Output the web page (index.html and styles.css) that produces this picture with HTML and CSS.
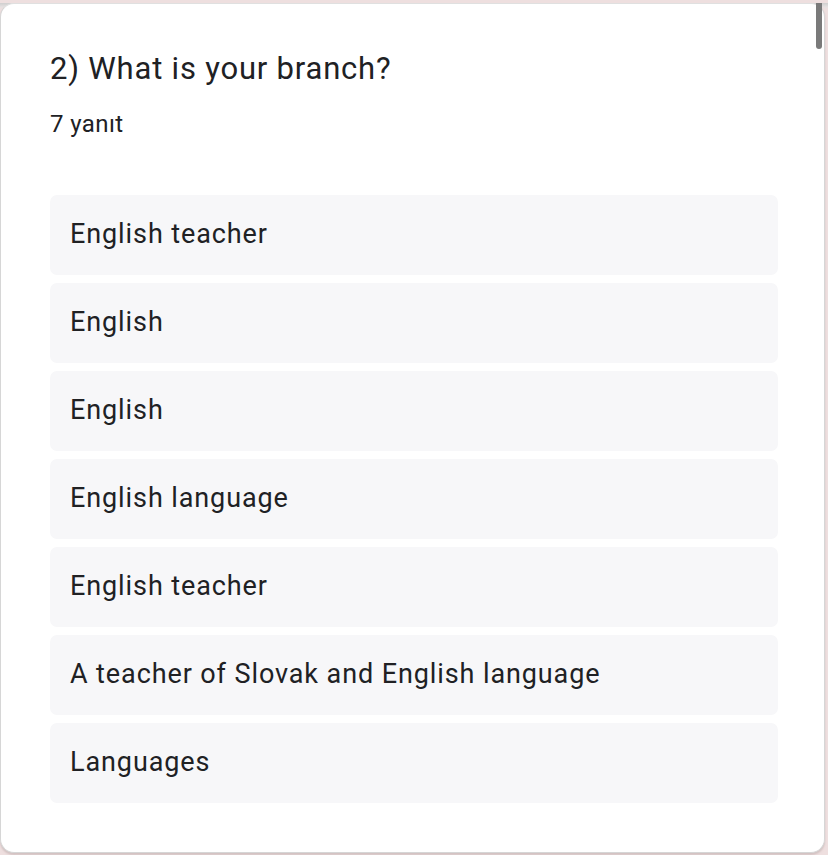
FILE: index.html
```html
<!DOCTYPE html>
<html>
<head>
<meta charset="utf-8">
<link rel="stylesheet" href="styles.css">
</head>
<body>
<div class="frame">
  <div class="card">
    <h1 class="title">2) What is your branch?</h1>
    <div class="count">7 yanıt</div>
    <ul class="answers">
      <li class="answer">English teacher</li>
      <li class="answer">English</li>
      <li class="answer">English</li>
      <li class="answer">English language</li>
      <li class="answer">English teacher</li>
      <li class="answer">A teacher of Slovak and English language</li>
      <li class="answer">Languages</li>
    </ul>
  </div>
  <div class="scroll-thumb"></div>
</div>
</body>
</html>
```
FILE: styles.css
```css
html, body {
  margin: 0;
  padding: 0;
}
body {
  width: 828px;
  height: 855px;
  background: #eedfdf;
  font-family: Roboto, "Noto Sans", sans-serif;
  color: #202124;
  overflow: hidden;
}
.frame {
  position: relative;
  width: 828px;
  height: 855px;
  background: linear-gradient(#cfcfcf, #e6e1e1 4px, #eedfdf 6px);
}
.card {
  box-sizing: border-box;
  margin: 3px 3px 0 0;
  height: 850px;
  background: #fff;
  border: 1px solid #d6d6d6;
  border-top-color: #e0e0e0;
  border-radius: 14px;
  box-shadow: 0 2px 2px rgba(160, 140, 140, 0.35);
  padding: 45px 46px 0 49px;
  display: flex;
  flex-direction: column;
}
.title {
  margin: 0;
  font-size: 31px;
  font-weight: 400;
  line-height: 40px;
  letter-spacing: 0.8px;
}
.count {
  margin-top: 20px;
  font-size: 24px;
  line-height: 30px;
  letter-spacing: 0.4px;
}
.answers {
  list-style: none;
  margin: 56px 0 0 0;
  padding: 0;
  display: flex;
  flex-direction: column;
  gap: 8px;
}
.answer {
  height: 80px;
  box-sizing: border-box;
  background: #f7f7f9;
  border-radius: 7px;
  padding: 0 20px 3px;
  display: flex;
  align-items: center;
  font-size: 27px;
  letter-spacing: 0.9px;
}
.scroll-thumb {
  position: absolute;
  left: 816px;
  top: 0;
  width: 6px;
  height: 46px;
  border-radius: 0 0 3px 3px;
  background: #7a7a7a;
}
```
